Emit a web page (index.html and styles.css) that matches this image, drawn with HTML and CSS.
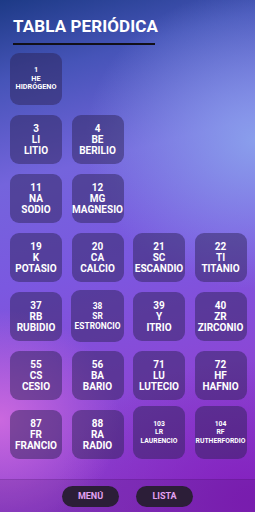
FILE: index.html
```html
<!DOCTYPE html>
<html>
<head>
  <title>Tabla Periódica</title>
  <link rel="stylesheet" href="styles.css">
</head>
<body>
  <div class="screen">
    <div class="header">
      <h1 class="title">TABLA PERIÓDICA</h1>
      <div class="title-line"></div>
    </div>

    <!-- Elements grid -->
    <div class="grid">
      <div class="tile tile-h tiny-h"><span>1</span><span>HE</span><span>HIDRÓGENO</span></div>

      <div class="tile r2 c1"><span>3</span><span>LI</span><span>LITIO</span></div>
      <div class="tile r2 c2"><span>4</span><span>BE</span><span>BERILIO</span></div>

      <div class="tile r3 c1"><span>11</span><span>NA</span><span>SODIO</span></div>
      <div class="tile r3 c2"><span>12</span><span>MG</span><span>MAGNESIO</span></div>

      <div class="tile r4 c1"><span>19</span><span>K</span><span>POTASIO</span></div>
      <div class="tile r4 c2"><span>20</span><span>CA</span><span>CALCIO</span></div>
      <div class="tile r4 c3"><span>21</span><span>SC</span><span>ESCANDIO</span></div>
      <div class="tile r4 c4"><span>22</span><span>TI</span><span>TITANIO</span></div>

      <div class="tile r5 c1"><span>37</span><span>RB</span><span>RUBIDIO</span></div>
      <div class="tile r5 c2 small"><span>38</span><span>SR</span><span>ESTRONCIO</span></div>
      <div class="tile r5 c3"><span>39</span><span>Y</span><span>ITRIO</span></div>
      <div class="tile r5 c4"><span>40</span><span>ZR</span><span>ZIRCONIO</span></div>

      <div class="tile r6 c1"><span>55</span><span>CS</span><span>CESIO</span></div>
      <div class="tile r6 c2"><span>56</span><span>BA</span><span>BARIO</span></div>
      <div class="tile r6 c3"><span>71</span><span>LU</span><span>LUTECIO</span></div>
      <div class="tile r6 c4"><span>72</span><span>HF</span><span>HAFNIO</span></div>

      <div class="tile r7 c1"><span>87</span><span>FR</span><span>FRANCIO</span></div>
      <div class="tile r7 c2"><span>88</span><span>RA</span><span>RADIO</span></div>
      <div class="tile r7 c3 tiny tall"><span>103</span><span>LR</span><span>LAURENCIO</span></div>
      <div class="tile r7 c4 tiny tall"><span>104</span><span>RF</span><span>RUTHERFORDIO</span></div>
    </div>

    <div class="bottom-bar">
      <button class="pill">MENÚ</button>
      <button class="pill">LISTA</button>
    </div>
  </div>
</body>
</html>
```

FILE: styles.css
```css
html, body {
  margin: 0;
  padding: 0;
}

body {
  width: 255px;
  height: 512px;
  overflow: hidden;
  font-family: Roboto, "Liberation Sans", sans-serif;
  color: #fff;
}

.screen {
  height: 512px;
  display: flex;
  flex-direction: column;
  background:
    radial-gradient(ellipse 120px 110px at 0px 420px, rgba(214, 110, 224, 0.85), rgba(214, 110, 224, 0) 100%),
    radial-gradient(ellipse 170px 150px at 255px 140px, rgba(140, 165, 238, 0.9), rgba(140, 165, 238, 0) 100%),
    radial-gradient(ellipse 200px 140px at 255px 500px, rgba(130, 30, 190, 0.9), rgba(130, 30, 190, 0) 100%),
    linear-gradient(165deg, #1d3a86 0%, #4654b8 14%, #7464dc 32%, #7b58e0 50%, #8a48d6 72%, #8c34c4 100%);
}

.header {
  padding: 16px 0 0 13px;
}

.title {
  margin: 0;
  font-size: 17px;
  font-weight: 700;
  line-height: 20px;
  letter-spacing: 0.1px;
}

.title-line {
  width: 142px;
  height: 2px;
  margin-top: 7px;
  background: #121018;
}

.grid {
  display: grid;
  grid-template-columns: repeat(4, 52px);
  grid-template-rows: 52px repeat(6, 49px);
  column-gap: 9.5px;
  row-gap: 10px;
  padding: 8px 0 0 10px;
}

.tile {
  display: flex;
  flex-direction: column;
  align-items: center;
  justify-content: center;
  background: rgba(44, 34, 84, 0.48);
  border-radius: 9px;
  font-size: 10px;
  font-weight: 700;
  line-height: 11.3px;
  text-align: center;
  white-space: nowrap;
}

.tile-h { grid-row: 1; grid-column: 1; }

.r2 { grid-row: 2; }
.r3 { grid-row: 3; }
.r4 { grid-row: 4; }
.r5 { grid-row: 5; }
.r6 { grid-row: 6; }
.r7 { grid-row: 7; }

.c1 { grid-column: 1; }
.c2 { grid-column: 2; }
.c3 { grid-column: 3; }
.c4 { grid-column: 4; }

.tiny-h {
  font-size: 7.3px;
  line-height: 8.5px;
}

.small {
  font-size: 8.4px;
  line-height: 10px;
  margin: -2px -0.5px -1px;
}

.tiny {
  font-size: 6.8px;
  line-height: 8.3px;
}

.tall {
  margin-top: -4px;
}

.bottom-bar {
  margin-top: auto;
  height: 32px;
  display: flex;
  justify-content: center;
  align-items: center;
  gap: 17px;
  background: rgba(40, 0, 60, 0.12);
  border-top: 1px solid rgba(60, 10, 90, 0.15);
}

.pill {
  width: 57px;
  height: 21px;
  padding: 0;
  border: none;
  border-radius: 11px;
  background: #2c1e38;
  color: #e3a2f2;
  font-family: Roboto, "Liberation Sans", sans-serif;
  font-size: 9px;
  font-weight: 700;
}
```
